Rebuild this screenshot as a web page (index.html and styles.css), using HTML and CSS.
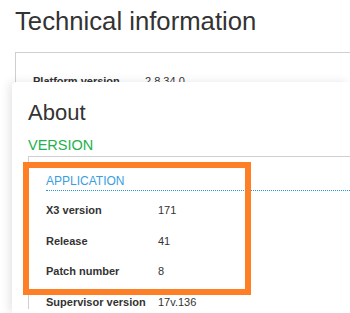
FILE: index.html
```html
<!DOCTYPE html>
<html>
<head>
<meta charset="utf-8">
<link rel="stylesheet" href="styles.css">
</head>
<body>
<div class="page">
  <h1 class="title">Technical information</h1>
  <div class="box outer-box">
    <div class="row"><span class="label">Platform version</span><span class="value">2.8.34.0</span></div>
  </div>
</div>
<div class="panel">
  <h2 class="about">About</h2>
  <div class="version">VERSION</div>
  <div class="box inner-box">
    <div class="section">APPLICATION</div>
    <div class="rows">
      <div class="row"><span class="label">X3 version</span><span class="value">171</span></div>
      <div class="row"><span class="label">Release</span><span class="value">41</span></div>
      <div class="row"><span class="label">Patch number</span><span class="value">8</span></div>
      <div class="row last"><span class="label">Supervisor version</span><span class="value">17v.136</span></div>
    </div>
  </div>
  <div class="highlight"></div>
</div>
</body>
</html>
```
FILE: styles.css
```css
html, body {
  margin: 0;
  padding: 0;
  background: #fff;
  overflow: hidden;
  height: 313px;
}
body {
  font-family: "Liberation Sans", Arial, sans-serif;
  color: #333;
  position: relative;
}
.page {
  padding: 6px 0 0 15px;
}
.title {
  margin: 0;
  font-size: 25.7px;
  line-height: 30px;
  font-weight: normal;
  color: #333;
}
.box {
  border-top: 1px solid #cfcfcf;
  border-left: 1px solid #cfcfcf;
}
.outer-box {
  margin-top: 16px;
  padding: 21px 0 0 17px;
  height: 200px;
}
.row {
  display: flex;
  font-size: 11px;
  line-height: 14px;
  padding-bottom: 16.67px;
}
.row.last {
  padding-bottom: 0;
}
.label {
  width: 112px;
  flex: none;
  font-weight: bold;
  color: #333;
}
.value {
  color: #333;
}
.panel {
  position: absolute;
  left: 12px;
  top: 82px;
  right: 0;
  bottom: 0;
  background: #fff;
  border-radius: 4px 0 0 0;
  box-shadow: -3px 0 10px rgba(0, 0, 0, 0.10);
  padding: 18px 0 0 16px;
  overflow: hidden;
}
.about {
  margin: 0;
  font-size: 22px;
  line-height: 26px;
  font-weight: normal;
  color: #333;
}
.version {
  margin-top: 10px;
  font-size: 14.5px;
  line-height: 18px;
  color: #22b14c;
}
.inner-box {
  margin-top: 2px;
  padding: 17px 0 0 17px;
}
.section {
  font-size: 12px;
  line-height: 15px;
  color: #3a9ee0;
  padding-bottom: 1px;
  border-bottom: 1px dotted #2a96d8;
}
.rows {
  padding-top: 12px;
}
.highlight {
  position: absolute;
  left: 11px;
  top: 80px;
  width: 216px;
  height: 121px;
  border: 6px solid #ff7f27;
}
```
